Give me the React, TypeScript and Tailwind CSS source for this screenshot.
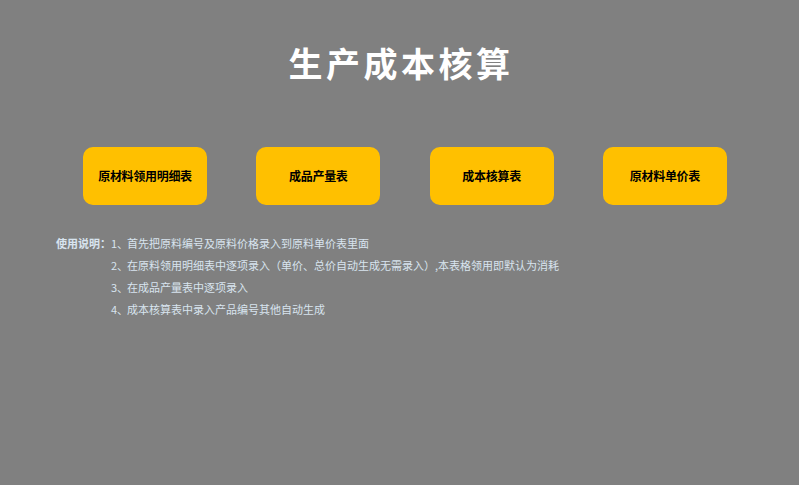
const sheets = ["原材料领用明细表", "成品产量表", "成本核算表", "原材料单价表"];

const steps = [
  "首先把原料编号及原料价格录入到原料单价表里面",
  "在原料领用明细表中逐项录入（单价、总价自动生成无需录入）,本表格领用即默认为消耗",
  "在成品产量表中逐项录入",
  "成本核算表中录入产品编号其他自动生成",
];

const cjk = "font-['Microsoft_YaHei','Noto_Sans_CJK_SC',sans-serif]";

export default function App() {
  return (
    <div className={`w-[799px] h-[485px] bg-[#808080] ${cjk}`}>
      <h1 className="pt-[43px] pl-[3px] text-center text-[34px] leading-[40px] font-bold tracking-[3.5px] text-white">
        生产成本核算
      </h1>

      <div className="mt-[64px] flex pl-[83px] gap-[49.3px]">
        {sheets.map((name) => (
          <button
            key={name}
            className="w-[124px] h-[58px] rounded-[10px] bg-[#ffc000] text-[12px] font-bold text-black tracking-[-0.3px]"
          >
            {name}
          </button>
        ))}
      </div>

      <div className="mt-[27px] pl-[56px] text-[11px] leading-[22px] text-[#d8e4ef]">
        {steps.map((text, i) => (
          <div key={i} className="flex">
            <span className="w-[55px] font-bold">{i === 0 ? "使用说明：" : ""}</span>
            <span className="w-[16px]">{i + 1}、</span>
            <span>{text}</span>
          </div>
        ))}
      </div>
    </div>
  );
}
